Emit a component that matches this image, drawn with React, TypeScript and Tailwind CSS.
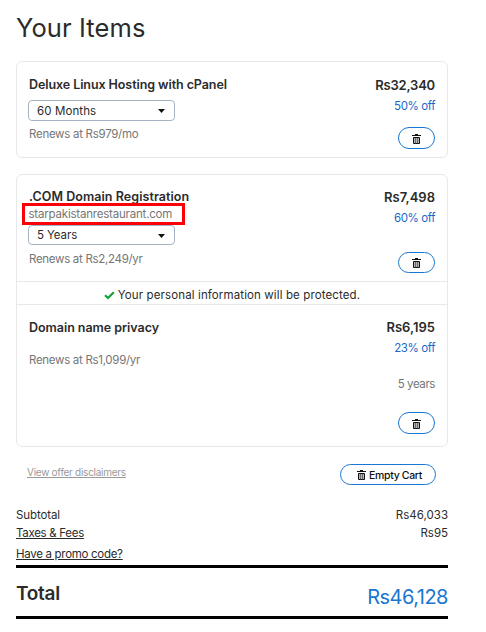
import type { ReactNode } from "react";

function TrashIcon() {
  return (
    <svg width="9" height="11" viewBox="0 0 9 11" fill="none" className="shrink-0" aria-hidden="true">
      <path d="M3 0h3v1H3zM0 1h9v1H0z" fill="#111" />
      <path d="M1.5 3.5v6h6v-6z" fill="#b5b5b5" stroke="#111" />
      <path d="M3.5 4v5.5M5.5 4v5.5" stroke="#555" strokeWidth="0.8" />
    </svg>
  );
}

function RemoveButton({ className }: { className: string }) {
  return (
    <button
      aria-label="Remove item"
      className={`flex w-[37px] items-center justify-center rounded-full border border-[#1976d2] pt-0.5 ${className}`}
    >
      <TrashIcon />
    </button>
  );
}

function TermSelect({ children, className }: { children: ReactNode; className: string }) {
  return (
    <button
      className={`flex w-[147px] items-center justify-between rounded-[4px] border border-[#a4b4c4] pr-[9px] pl-2 text-[11.5px] text-[#2b2b2b] ${className}`}
    >
      <span className="pt-0.5">{children}</span>
      <svg width="7" height="4" viewBox="0 0 7 4" className="mt-px" aria-hidden="true">
        <path d="M0 0h7L3.5 4z" fill="#111" />
      </svg>
    </button>
  );
}

export default function App() {
  return (
    <main className="h-[632px] w-[486px] overflow-hidden bg-white pl-4 font-['Inter','Liberation_Sans',sans-serif] text-[#2b2b2b]">
      <div className="w-[432px]">
        <h1 className="h-[61px] pt-3 text-[25.5px] leading-8 tracking-[0.1px] whitespace-nowrap">Your Items</h1>

        <section className="flex h-[97px] justify-between rounded-md border border-[#e8e8e8] px-[11px] pt-[14px]">
          <div className="flex flex-col items-start">
            <h2 className="ml-px h-6 text-[12.5px] leading-[18px] font-semibold tracking-[-0.08px] whitespace-nowrap">
              Deluxe Linux Hosting with cPanel
            </h2>
            <TermSelect className="h-[21px] tracking-[0.1px]">60 Months</TermSelect>
            <p className="mt-1 ml-px text-[11.5px] leading-[18px] tracking-[-0.28px] whitespace-nowrap text-[#767676]">
              Renews at Rs979/mo
            </p>
          </div>
          <div className="flex flex-col items-end pr-px">
            <p className="text-[13px] leading-[18px] font-semibold tracking-[-0.2px]">Rs32,340</p>
            <p className="mt-[3px] text-[11.5px] leading-[18px] tracking-[-0.4px] text-[#1b69c9]">50% off</p>
            <RemoveButton className="mt-3 h-[22px]" />
          </div>
        </section>

        <section className="mt-4 h-[273px] rounded-md border border-[#e8e8e8]">
          <div className="flex h-[106px] justify-between px-[11px] pt-[13px]">
            <div className="flex flex-col items-start">
              <h2 className="ml-px h-[15px] text-[12.5px] leading-[18px] font-semibold tracking-[0.06px] whitespace-nowrap">
                .COM Domain Registration
              </h2>
              <div className="-ml-[6px] flex h-[22px] w-[163px] items-center border-3 border-[#fb0007] pt-px pl-[3.5px] text-[11.5px] tracking-[-0.2px] whitespace-nowrap text-[#767676]">
                starpakistanrestaurant.com
              </div>
              <TermSelect className="h-5 tracking-[-0.1px]">5 Years</TermSelect>
              <p className="mt-[5px] ml-px text-[11.5px] leading-[18px] tracking-[-0.3px] whitespace-nowrap text-[#767676]">
                Renews at Rs2,249/yr
              </p>
            </div>
            <div className="flex flex-col items-end pr-px">
              <p className="text-[13px] leading-[18px] font-semibold">Rs7,498</p>
              <p className="mt-[3px] text-[11.5px] leading-[18px] tracking-[-0.4px] text-[#1b69c9]">60% off</p>
              <RemoveButton className="mt-[25px] h-[21px]" />
            </div>
          </div>

          <div className="flex h-6 items-center justify-center border-y border-[#e8e8e8] pt-[5px] text-[11.5px] tracking-[0.12px] whitespace-nowrap">
            <svg width="11" height="9" viewBox="0 0 11 9" fill="none" className="mr-[3px]" aria-hidden="true">
              <path d="M1 4.2l3 2.8L9.8 1.3" stroke="#14a33a" strokeWidth="2.2" />
            </svg>
            Your personal information will be protected.
          </div>

          <div className="flex justify-between px-[11px] pt-[13px]">
            <div className="pl-px">
              <h2 className="pt-px text-[12.5px] leading-[18px] font-semibold tracking-[-0.04px] whitespace-nowrap">
                Domain name privacy
              </h2>
              <p className="mt-[14px] text-[11.5px] leading-[18px] tracking-[-0.3px] whitespace-nowrap text-[#767676]">
                Renews at Rs1,099/yr
              </p>
            </div>
            <div className="flex flex-col items-end pr-px">
              <p className="text-[13px] leading-[18px] font-semibold">Rs6,195</p>
              <p className="mt-[3px] text-[11.5px] leading-[18px] tracking-[-0.4px] text-[#1b69c9]">23% off</p>
              <p className="mt-[18px] text-[11.5px] leading-[18px] tracking-[-0.4px] text-[#767676]">5 years</p>
              <RemoveButton className="mt-[19px] h-[22px]" />
            </div>
          </div>
        </section>

        <div className="mt-[17px] flex h-[21px] items-start justify-between pr-3 pl-[11px]">
          <a className="text-[10px] leading-[17px] tracking-[-0.27px] whitespace-nowrap text-[#999] underline">
            View offer disclaimers
          </a>
          <button className="flex h-[21px] w-24 items-center justify-center gap-[3px] rounded-full border border-[#1976d2] pt-px pl-[3px] text-[10.5px] font-medium tracking-[-0.35px] whitespace-nowrap text-[#111]">
            <TrashIcon />
            <span className="pt-px">Empty Cart</span>
          </button>
        </div>

        <dl className="mt-[21px] text-[11.5px] leading-[18px]">
          <div className="flex justify-between">
            <dt className="tracking-[-0.1px]">Subtotal</dt>
            <dd>Rs46,033</dd>
          </div>
          <div className="flex justify-between">
            <dt className="tracking-[-0.3px] underline">Taxes &amp; Fees</dt>
            <dd>Rs95</dd>
          </div>
        </dl>
        <a className="mt-[3px] block h-5 text-[11.5px] leading-[18px] tracking-[-0.3px] underline">
          Have a promo code?
        </a>
        <div className="flex h-[54px] items-start justify-between border-y-3 border-black">
          <span className="pt-3 text-[19px] leading-7 font-semibold tracking-[-0.3px]">Total</span>
          <span className="pt-[15px] text-[20px] leading-7 tracking-[-0.5px] text-[#1976d2]">Rs46,128</span>
        </div>
      </div>
    </main>
  );
}
